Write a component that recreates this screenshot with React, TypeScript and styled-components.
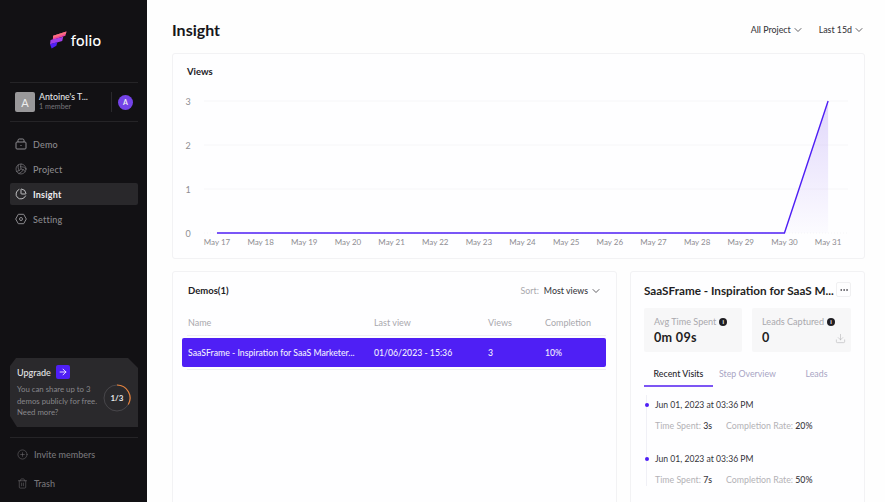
import styled, { createGlobalStyle } from 'styled-components';
import { ChevronDown, CirclePlus, Download, MoreHorizontal, PieChart, Trash2, Volleyball, ArrowRight } from 'lucide-react';

const GlobalStyle = createGlobalStyle`
  * { box-sizing: border-box; }
  html, body { margin: 0; height: 100%; overflow: hidden; background: #fefefe; }
  body { font-family: "Lato", "Liberation Sans", sans-serif; color: #1c1b1f; }
`;

const Shell = styled.div`
  display: flex;
  height: 100vh;
  overflow: hidden;
`;

const Sidebar = styled.aside`
  width: 147px;
  flex: none;
  background: #121114;
  padding: 30px 9px 0 10px;
  display: flex;
  flex-direction: column;
`;

const Logo = styled.div`
  display: flex;
  align-items: center;
  justify-content: center;
  gap: 4px;
  height: 20px;
  padding-left: 3px;
  color: #fff;
  font-size: 15px;
  font-weight: 500;
  letter-spacing: 0.2px;
  margin-bottom: 32px;
`;

const Team = styled.div`
  height: 40px;
  border-top: 1px solid #252427;
  border-bottom: 1px solid #252427;
  display: flex;
  align-items: center;
  padding-left: 5px;
`;

const TeamTile = styled.div`
  width: 20px;
  height: 20px;
  border-radius: 2px;
  background: #99989a;
  color: #eee;
  font-size: 11px;
  display: flex;
  align-items: center;
  justify-content: center;
  margin-right: 4px;
`;

const TeamText = styled.div`
  flex: 1;
  line-height: 10px;
`;

const TeamName = styled.div`
  color: #e4e4e6;
  font-size: 8.8px;
  font-weight: 500;
`;

const TeamMeta = styled.div`
  color: #77767a;
  font-size: 7.2px;
`;

const TeamAvatar = styled.div`
  width: 22px;
  height: 20px;
  border-left: 1px solid #2a292c;
  display: flex;
  justify-content: flex-end;
  align-items: center;
  margin-right: 5px;

  span {
    width: 15px;
    height: 15px;
    border-radius: 50%;
    background: #7443e8;
    color: #eee;
    font-size: 7px;
    font-weight: 700;
    display: flex;
    align-items: center;
    justify-content: center;
  }
`;

const Nav = styled.nav`
  margin-top: 11px;
  display: flex;
  flex-direction: column;
  gap: 3px;
`;

const NavItem = styled.div<{ $active?: boolean }>`
  height: 22px;
  display: flex;
  align-items: center;
  gap: 6px;
  padding-left: 5px;
  border-radius: 2px;
  font-size: 9px;
  font-weight: ${(p) => (p.$active ? 700 : 500)};
  letter-spacing: 0.2px;
  color: ${(p) => (p.$active ? '#eeeeef' : '#8b8a8e')};
  background: ${(p) => (p.$active ? '#29282b' : 'transparent')};

  svg { flex: none; }
`;

const Spacer = styled.div`
  flex: 1;
`;

const UpgradeCard = styled.div`
  height: 69px;
  width: 128px;
  background: #2a292c;
  clip-path: polygon(0 8px, 6px 0, 118px 0, 100% 10px, 100% 100%, 7px 100%, 0 58px);
  padding: 7px 7px 0;
  display: flex;
  justify-content: space-between;
`;

const UpgradeText = styled.div`
  width: 82px;
`;

const UpgradeTitle = styled.div`
  display: flex;
  align-items: center;
  gap: 5px;
  color: #e6e6e7;
  font-size: 9px;
  font-weight: 500;
  height: 14px;
  margin-bottom: 5px;
`;

const ArrowTile = styled.span`
  width: 14px;
  height: 14px;
  border-radius: 2px;
  background: #4f1ff5;
  color: #fff;
  display: flex;
  align-items: center;
  justify-content: center;
`;

const UpgradeCopy = styled.div`
  color: #88878b;
  font-size: 7.8px;
  line-height: 11.5px;
  white-space: nowrap;
`;

const Gauge = styled.svg`
  margin-top: 19px;
  flex: none;
`;

const SideLinks = styled.div`
  margin-top: 10px;
  border-top: 1px solid #252427;
  display: flex;
  flex-direction: column;
  padding: 5px 0 8px;
  gap: 7px;
`;

const SideLink = styled.div`
  height: 22px;
  display: flex;
  align-items: center;
  gap: 6px;
  padding-left: 7px;
  color: #77767a;
  font-size: 9px;
  font-weight: 500;
`;

const Main = styled.main`
  flex: 1;
  min-width: 0;
  padding: 0 20px 0 25px;
  display: flex;
  flex-direction: column;
`;

const Header = styled.header`
  height: 53px;
  flex: none;
  padding-top: 6px;
  display: flex;
  align-items: center;
  justify-content: space-between;
`;

const PageTitle = styled.h1`
  margin: 0 0 1px;
  font-size: 16px;
  font-weight: 700;
  color: #18171b;
`;

const Filters = styled.div`
  display: flex;
  gap: 15px;
`;

const Filter = styled.div`
  display: flex;
  align-items: center;
  gap: 1px;
  font-size: 8.8px;
  font-weight: 500;
  color: #3b3a3f;
`;

const Card = styled.section`
  background: #fefeff;
  border: 1px solid #f2f2f4;
  border-radius: 3px;
`;

const ChartCard = styled(Card)`
  height: 206px;
  flex: none;
  position: relative;
`;

const ChartTitle = styled.div`
  position: absolute;
  left: 14px;
  top: 12px;
  font-size: 9.5px;
  font-weight: 700;
  color: #222126;
`;

const ChartSvg = styled.svg`
  display: block;
`;

const Lower = styled.div`
  margin-top: 12px;
  display: grid;
  grid-template-columns: 445px 235px;
  gap: 13px;
  flex: none;
  height: 300px;
`;

const DemosHead = styled.div`
  height: 37px;
  padding: 0 14px 0 15px;
  display: flex;
  align-items: center;
  justify-content: space-between;
`;

const DemosTitle = styled.div`
  font-size: 9.5px;
  font-weight: 700;
  color: #222126;
`;

const Sort = styled.div`
  display: flex;
  align-items: center;
  gap: 2px;
  font-size: 8.8px;
  font-weight: 500;
  color: #3b3a3f;

  span { color: #a9a8ad; font-weight: 400; margin-right: 3px; }
`;

const RowGrid = styled.div`
  display: grid;
  grid-template-columns: 186px 114px 57px 1fr;
  align-items: center;
`;

const TableHead = styled(RowGrid)`
  height: 27px;
  margin: 0 10px 0 14px;
  padding-left: 1px;
  border-bottom: 1px solid #f0f0f2;
  color: #a9a8ad;
  font-size: 9px;
`;

const SelectedRow = styled(RowGrid)`
  height: 29px;
  margin: 2px 10px 0 9px;
  padding-left: 6px;
  background: #4f1ff5;
  border-radius: 2px;
  color: #f1eefe;
  font-size: 8.7px;
  font-weight: 500;
`;

const Ellipsis = styled.div`
  white-space: nowrap;
  overflow: hidden;
  text-overflow: ellipsis;
`;

const RowRule = styled.div`
  height: 1px;
  margin: 2px 10px 0 14px;
  background: #f0f0f2;
`;

const DetailCard = styled(Card)`
  padding: 10px 13px 0;
`;

const DetailHead = styled.div`
  height: 15px;
  display: flex;
  align-items: center;
  justify-content: space-between;
  gap: 2px;
`;

const DetailTitle = styled.div`
  font-size: 11.7px;
  font-weight: 700;
  color: #1f1e23;
  white-space: nowrap;
`;

const MoreButton = styled.div`
  width: 15px;
  height: 15px;
  flex: none;
  border: 1px solid #f0f0f2;
  border-radius: 2px;
  display: flex;
  align-items: center;
  justify-content: center;
  color: #44434a;
`;

const Stats = styled.div`
  margin-top: 11px;
  display: grid;
  grid-template-columns: 98px 99px;
  gap: 10px;
`;

const Stat = styled.div`
  height: 44px;
  background: #f7f7f8;
  border-radius: 2px;
  padding: 8px 10px 0;
  position: relative;
`;

const StatLabel = styled.div`
  display: flex;
  align-items: center;
  gap: 3px;
  font-size: 9.1px;
  color: #a9a8ad;
`;

const InfoDot = styled.span`
  width: 8px;
  height: 8px;
  border-radius: 50%;
  background: #1f1e23;
  color: #fff;
  font-size: 6px;
  font-weight: 700;
  line-height: 8px;
  text-align: center;
`;

const StatValue = styled.div`
  margin-top: 3px;
  font-size: 12.6px;
  font-weight: 700;
  color: #1f1e23;
  letter-spacing: 0.3px;
`;

const StatAction = styled.div`
  position: absolute;
  right: 5px;
  bottom: 8px;
  color: #b5b4b8;
  display: flex;
`;

const Tabs = styled.div`
  margin-top: 9px;
  display: grid;
  grid-template-columns: repeat(3, 69px);
  height: 26px;
`;

const Tab = styled.div<{ $active?: boolean }>`
  display: flex;
  align-items: center;
  justify-content: center;
  font-size: 8.8px;
  font-weight: ${(p) => (p.$active ? 500 : 400)};
  color: ${(p) => (p.$active ? '#27262b' : '#a8a5c4')};
  border-bottom: 2px solid ${(p) => (p.$active ? '#7c55f4' : 'transparent')};
`;

const Timeline = styled.div`
  margin: 8px 0 0 2px;
  padding-left: 8px;
  border-left: 1px solid #f0f0f6;
  display: flex;
  flex-direction: column;
  gap: 17px;
`;

const Visit = styled.div`
  position: relative;
  padding-top: 4px;
`;

const VisitDot = styled.span`
  position: absolute;
  left: -10.5px;
  top: 8px;
  width: 4px;
  height: 4px;
  border-radius: 50%;
  background: #4f1ff5;
`;

const VisitDate = styled.div`
  font-size: 8.6px;
  line-height: 12px;
  color: #35343a;
`;

const VisitMeta = styled.div`
  margin-top: 9px;
  display: flex;
  gap: 14px;
  font-size: 8.8px;
  line-height: 12px;
  color: #b3b2b6;

  b { font-weight: 500; color: #3b3a3f; }
`;

const days = ['May 17', 'May 18', 'May 19', 'May 20', 'May 21', 'May 22', 'May 23', 'May 24', 'May 25', 'May 26', 'May 27', 'May 28', 'May 29', 'May 30', 'May 31'];

function ViewsChart() {
  // svg origin is the card's inner corner, (173,54) on the page
  const ys = [179, 135, 91, 47];
  const xAt = (i: number) => 44 + i * 43.65;
  return (
    <ChartSvg width="691" height="204" viewBox="0 0 691 204">
      <defs>
        <linearGradient id="area" x1="0" y1="0" x2="0" y2="1">
          <stop offset="0" stopColor="#c9b8f8" stopOpacity="0.55" />
          <stop offset="1" stopColor="#c9b8f8" stopOpacity="0.04" />
        </linearGradient>
      </defs>
      {ys.map((y, i) => (
        <g key={i}>
          <text x="15" y={y + 4} fontSize="9" fill="#8e8d92" textAnchor="middle">{i}</text>
          <line x1="31" x2="675" y1={y} y2={y} stroke="#f6f6f8" strokeDasharray={i === 0 ? '1 2' : undefined} />
        </g>
      ))}
      <polygon points={`${xAt(13)},179 ${xAt(14)},47 ${xAt(14)},179`} fill="url(#area)" />
      <polyline points={`${xAt(0)},179 ${xAt(13)},179 ${xAt(14)},47`} fill="none" stroke="#4f1ff5" strokeWidth="1.4" />
      {days.map((d, i) => (
        <text key={d} x={xAt(i)} y="191" fontSize="8" fill="#8e8d92" textAnchor="middle">{d}</text>
      ))}
    </ChartSvg>
  );
}

function FolioMark() {
  return (
    <svg width="17" height="18" viewBox="0 0 16 17">
      <path d="M3 4.5 15.5 0.5 14.5 4.5 2.5 8.5Z" fill="#f0459a" />
      <path d="M3 4.5 15.5 0.5 15 2.5 2.8 6.5Z" fill="#f9707c" />
      <path d="M0.5 8.5 12.5 5.5 11.5 9.5 4 11.5 0 12.5Z" fill="#a03ee8" />
      <path d="M0 12.5 7 10.5 6 14 1.5 16.5Z" fill="#4f1ff5" />
    </svg>
  );
}

function DemoIcon() {
  return (
    <svg width="12" height="12" viewBox="0 0 12 12" fill="none" stroke="currentColor" strokeWidth="1">
      <path d="M3 4V2.2C3 1.6 3.5 1 4.2 1h3.6C8.5 1 9 1.6 9 2.2V4" />
      <rect x="1" y="4" width="10" height="7" rx="1" />
      <path d="M5.5 7.5h1" />
    </svg>
  );
}

function SettingIcon() {
  return (
    <svg width="12" height="12" viewBox="0 0 12 12" fill="none" stroke="currentColor" strokeWidth="1">
      <path d="M3.3 1.3h5.4L11.3 6 8.7 10.7H3.3L.7 6Z" />
      <circle cx="6" cy="6" r="1.5" />
    </svg>
  );
}

export default function App() {
  return (
    <Shell>
      <GlobalStyle />
      <Sidebar>
        <Logo><FolioMark />folio</Logo>
        <Team>
          <TeamTile>A</TeamTile>
          <TeamText>
            <TeamName>Antoine's T...</TeamName>
            <TeamMeta>1 member</TeamMeta>
          </TeamText>
          <TeamAvatar><span>A</span></TeamAvatar>
        </Team>
        <Nav>
          <NavItem><DemoIcon />Demo</NavItem>
          <NavItem><Volleyball size={12} strokeWidth={1.2} />Project</NavItem>
          <NavItem $active><PieChart size={12} strokeWidth={1.5} />Insight</NavItem>
          <NavItem><SettingIcon />Setting</NavItem>
        </Nav>
        <Spacer />
        <UpgradeCard>
          <UpgradeText>
            <UpgradeTitle>Upgrade<ArrowTile><ArrowRight size={10} /></ArrowTile></UpgradeTitle>
            <UpgradeCopy>You can share up to 3<br />demos publicly for free.<br />Need more?</UpgradeCopy>
          </UpgradeText>
          <Gauge width="28" height="28" viewBox="0 0 28 28">
            <circle cx="14" cy="14" r="13" fill="none" stroke="#48474b" strokeWidth="1" />
            <path d="M14 1A13 13 0 0 1 25.3 20.5" fill="none" stroke="#e8813a" strokeWidth="1.2" />
            <text x="14" y="17" fontSize="8" fontWeight="700" fill="#e6e6e7" textAnchor="middle">1/3</text>
          </Gauge>
        </UpgradeCard>
        <SideLinks>
          <SideLink><CirclePlus size={11} strokeWidth={1.1} />Invite members</SideLink>
          <SideLink><Trash2 size={11} strokeWidth={1.1} />Trash</SideLink>
        </SideLinks>
      </Sidebar>
      <Main>
        <Header>
          <PageTitle>Insight</PageTitle>
          <Filters>
            <Filter>All Project<ChevronDown size={12} strokeWidth={1.6} /></Filter>
            <Filter>Last 15d<ChevronDown size={12} strokeWidth={1.6} /></Filter>
          </Filters>
        </Header>
        <ChartCard>
          <ChartTitle>Views</ChartTitle>
          <ViewsChart />
        </ChartCard>
        <Lower>
          <Card>
            <DemosHead>
              <DemosTitle>Demos(1)</DemosTitle>
              <Sort><span>Sort:</span>Most views<ChevronDown size={12} strokeWidth={1.6} /></Sort>
            </DemosHead>
            <TableHead>
              <div>Name</div>
              <div>Last view</div>
              <div>Views</div>
              <div>Completion</div>
            </TableHead>
            <SelectedRow>
              <Ellipsis>SaaSFrame - Inspiration for SaaS Marketer...</Ellipsis>
              <div>01/06/2023 - 15:36</div>
              <div>3</div>
              <div>10%</div>
            </SelectedRow>
            <RowRule />
          </Card>
          <DetailCard>
            <DetailHead>
              <DetailTitle>SaaSFrame - Inspiration for SaaS M...</DetailTitle>
              <MoreButton><MoreHorizontal size={10} /></MoreButton>
            </DetailHead>
            <Stats>
              <Stat>
                <StatLabel>Avg Time Spent<InfoDot>i</InfoDot></StatLabel>
                <StatValue>0m 09s</StatValue>
              </Stat>
              <Stat>
                <StatLabel>Leads Captured<InfoDot>i</InfoDot></StatLabel>
                <StatValue>0</StatValue>
                <StatAction><Download size={11} strokeWidth={1.3} /></StatAction>
              </Stat>
            </Stats>
            <Tabs>
              <Tab $active>Recent Visits</Tab>
              <Tab>Step Overview</Tab>
              <Tab>Leads</Tab>
            </Tabs>
            <Timeline>
              <Visit>
                <VisitDot />
                <VisitDate>Jun 01, 2023 at 03:36 PM</VisitDate>
                <VisitMeta><span>Time Spent: <b>3s</b></span><span>Completion Rate: <b>20%</b></span></VisitMeta>
              </Visit>
              <Visit>
                <VisitDot />
                <VisitDate>Jun 01, 2023 at 03:36 PM</VisitDate>
                <VisitMeta><span>Time Spent: <b>7s</b></span><span>Completion Rate: <b>50%</b></span></VisitMeta>
              </Visit>
            </Timeline>
          </DetailCard>
        </Lower>
      </Main>
    </Shell>
  );
}
